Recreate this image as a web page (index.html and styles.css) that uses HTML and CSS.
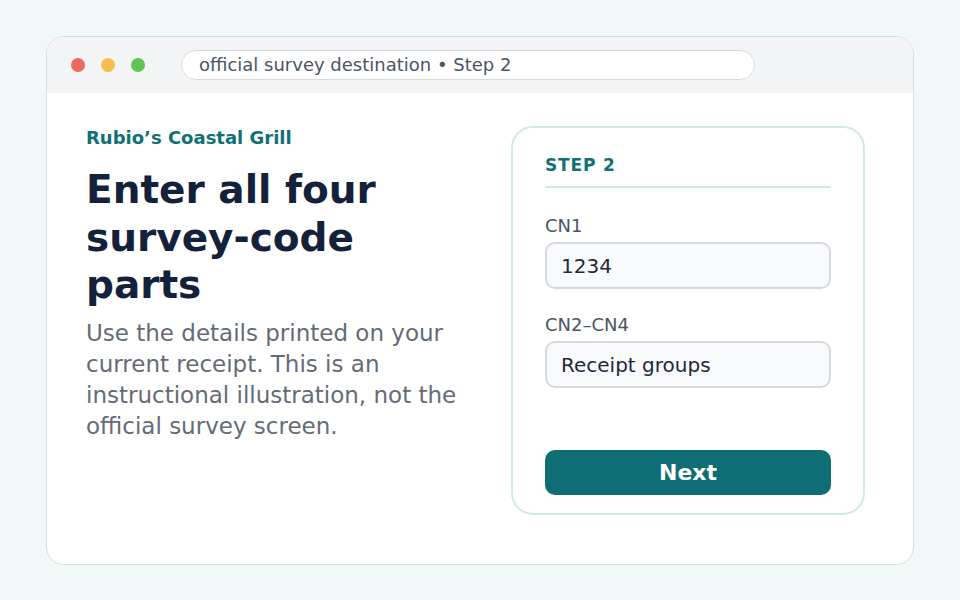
FILE: index.html
```html
<!DOCTYPE html>
<html lang="en">

<head>
    <meta charset="UTF-8">
    <meta name="viewport" content="width=device-width, initial-scale=1.0">
    <title>Survey Code Step 2</title>
    <link rel="stylesheet" href="styles.css">
</head>

<body>
    <div class="window">
        <div class="titlebar">
            <div class="dots">
                <span class="dot red"></span>
                <span class="dot yellow"></span>
                <span class="dot green"></span>
            </div>
            <div class="address">official survey destination • Step 2</div>
        </div>

        <div class="content">
            <section class="intro">
                <p class="brand">Rubio’s Coastal Grill</p>
                <h1>Enter all four survey-code parts</h1>
                <p class="lead">Use the details printed on your current receipt. This is an instructional illustration, not the official survey screen.</p>
            </section>

            <section class="card">
                <h2>STEP 2</h2>
                <label class="field">
                    <span>CN1</span>
                    <input type="text" value="1234">
                </label>
                <label class="field">
                    <span>CN2–CN4</span>
                    <input type="text" value="Receipt groups">
                </label>
                <button class="next">Next</button>
            </section>
        </div>
    </div>
</body>

</html>
```

FILE: styles.css
```css
body {
    font-family: 'DejaVu Sans', 'Noto Sans', sans-serif;
    margin: 0;
    padding: 36px 46px;
    background: #f1f9f8;
}

.window {
    background: #fff;
    border: 1px solid #d3e2e0;
    border-radius: 18px;
    overflow: hidden;
    height: 529px;
    box-sizing: border-box;
}

.titlebar {
    display: flex;
    align-items: center;
    height: 56px;
    padding: 0 24px;
    background: #f3f4f6;
}

.dots {
    display: flex;
    gap: 16px;
}

.dot {
    width: 14px;
    height: 14px;
    border-radius: 50%;
}

.red { background: #ec6a5e; }
.yellow { background: #f4bf4f; }
.green { background: #61c554; }

.address {
    flex: 1;
    margin: 0 134px 1px 36px;
    height: 28px;
    line-height: 28px;
    padding: 0 17px;
    background: #fff;
    border: 1px solid #d6d9de;
    border-radius: 15px;
    font-size: 18px;
    color: #4b5563;
}

.content {
    display: grid;
    grid-template-columns: 1fr 354px;
    gap: 45px;
    padding: 33px 48px 0 39px;
}

.brand {
    margin: 0;
    font-size: 18px;
    line-height: 24px;
    font-weight: 700;
    color: #0f7173;
}

h1 {
    margin: 16px 0 9px;
    font-size: 39px;
    line-height: 47.5px;
    color: #14213a;
}

.lead {
    margin: 0;
    font-size: 23px;
    line-height: 31px;
    color: #646b76;
}

.card {
    display: flex;
    flex-direction: column;
    border: 2px solid #d0e9e6;
    border-radius: 22px;
    padding: 24px 32px 18px;
}

h2 {
    margin: 0 0 26px;
    padding-bottom: 8px;
    border-bottom: 2px solid #d0e9e6;
    font-size: 17px;
    line-height: 26px;
    letter-spacing: 0.05em;
    color: #0f7173;
}

.field {
    display: flex;
    flex-direction: column;
    gap: 4px;
    margin-bottom: 24px;
}

.field span {
    font-size: 18px;
    line-height: 24px;
    color: #4b5563;
}

.field input {
    height: 47px;
    box-sizing: border-box;
    padding: 0 14px;
    font-family: inherit;
    font-size: 20px;
    color: #1f2937;
    background: #f8fafc;
    border: 2px solid #d6d9de;
    border-radius: 10px;
}

.next {
    margin-top: 38px;
    height: 45px;
    font-family: inherit;
    font-size: 22px;
    font-weight: 700;
    color: #fff;
    background: #0f6e73;
    border: none;
    border-radius: 10px;
}
```
